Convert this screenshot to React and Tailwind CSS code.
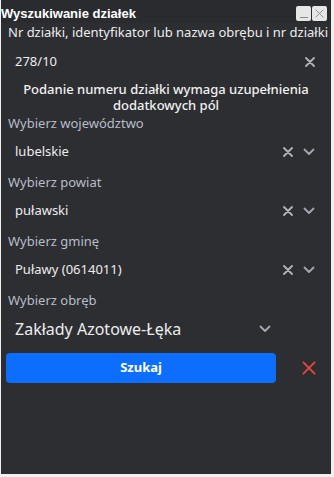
import React from "react";

const Chevron = ({ className = "" }) => (
  <svg className={className} width="12" height="8" viewBox="0 0 12 8" fill="none">
    <path d="M1.5 1.5 L6 6 L10.5 1.5" stroke="#a2a7b0" strokeWidth="1.8" strokeLinecap="round" strokeLinejoin="round" />
  </svg>
);

const Cross = ({ size = 10, color = "#b1b4ba", width = 1.8 }) => (
  <svg width={size} height={size} viewBox="0 0 10 10" fill="none">
    <path d="M1 1 L9 9 M9 1 L1 9" stroke={color} strokeWidth={width} strokeLinecap="round" />
  </svg>
);

function Label({ children }) {
  return <div className="h-[20px] flex items-center pl-[7px] text-[13px] text-[#b7bdc8]">{children}</div>;
}

function Select({ value, clear = true, big = false }) {
  return (
    <div className={`h-[36px] flex items-center pl-[14px] ${big ? "w-[282px] pr-[12px]" : "pr-[16px]"}`}>
      <span className={`flex-1 text-[#ececec] ${big ? "text-[16px]" : "text-[13px]"}`}>{value}</span>
      {clear && (
        <span className="mr-[10px] flex items-center">
          <Cross />
        </span>
      )}
      <Chevron />
    </div>
  );
}

export default function App() {
  return (
    <div className="w-[334px] h-[477px] bg-[#f0f0f0]" style={{ fontFamily: '"Noto Sans", "Open Sans", sans-serif' }}>
      <div className="ml-[1px] w-[330px] h-[474px] bg-[#2d2e32] flex flex-col">
        <div className="h-[23px] flex items-center justify-between pl-[0px] pr-[4px] pt-[4px] bg-[#2a2b2f]">
          <span className="text-[13px] font-bold text-white" style={{ fontFamily: '"Liberation Sans", Arial, sans-serif' }}>
            Wyszukiwanie działek
          </span>
          <div className="flex gap-[1px]">
            <div className="w-[15px] h-[15px] rounded-[2px] bg-[#e6e6e6] flex items-end justify-center pb-[3px]">
              <div className="w-[8px] h-[1px] bg-[#8a8a8a]" />
            </div>
            <div className="w-[15px] h-[15px] rounded-[2px] bg-[#e6e6e6] flex items-center justify-center">
              <Cross size={9} color="#8a8a8a" width={1} />
            </div>
          </div>
        </div>
        <div className="h-[20px] flex items-center pl-[7px] text-[13px] text-[#ececec]">
          Nr działki, identyfikator lub nazwa obrębu i nr działki
        </div>
        <div className="h-[38px] flex items-center pl-[14px] pr-[16px]">
          <span className="flex-1 text-[13px] text-[#ececec]">278/10</span>
          <Cross />
        </div>
        <div className="flex flex-col items-center text-[13px] font-medium leading-[16px] text-[#f0f0f0] pb-[1px]">
          <span>Podanie numeru działki wymaga uzupełnienia</span>
          <span>dodatkowych pól</span>
        </div>
        <Label>Wybierz województwo</Label>
        <Select value="lubelskie" />
        <div className="h-[3px]" />
        <Label>Wybierz powiat</Label>
        <Select value="puławski" />
        <div className="h-[3px]" />
        <Label>Wybierz gminę</Label>
        <Select value="Puławy (0614011)" />
        <div className="h-[3px]" />
        <Label>Wybierz obręb</Label>
        <Select value="Zakłady Azotowe-Łęka" clear={false} big />
        <div className="flex items-center mt-[6px] pl-[5px]">
          <button className="w-[270px] h-[30px] rounded-[4px] bg-[#0d6efd] text-white text-[13px] font-bold">Szukaj</button>
          <span className="ml-[26px] flex items-center">
            <Cross size={14} color="#e5483f" width={1.3} />
          </span>
        </div>
      </div>
    </div>
  );
}
